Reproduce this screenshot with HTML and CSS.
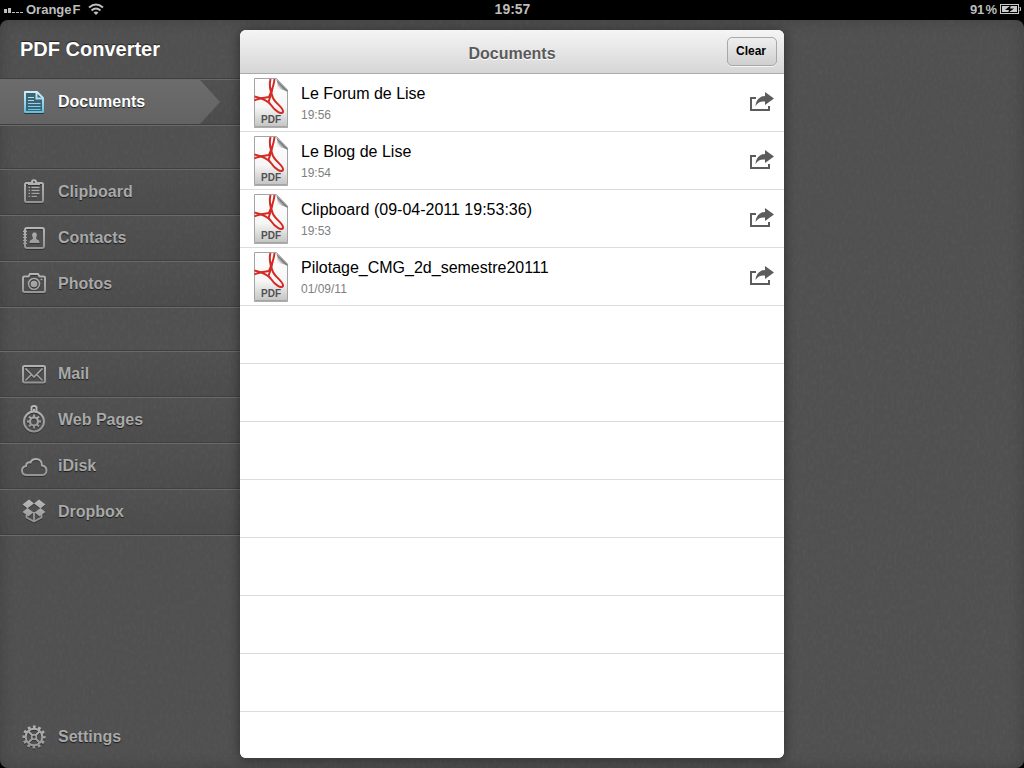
FILE: index.html
```html
<!DOCTYPE html>
<html lang="en">
<head>
<meta charset="utf-8">
<meta name="viewport" content="width=device-width, initial-scale=1">
<title>PDF Converter</title>
<link rel="stylesheet" href="styles.css">
</head>
<body>
<svg class="defs" width="0" height="0" aria-hidden="true">
  <defs>
    <linearGradient id="metal" gradientUnits="userSpaceOnUse" x1="0" y1="2" x2="0" y2="26"><stop offset="0" stop-color="#b8b8b8"/><stop offset="1" stop-color="#909090"/></linearGradient>
    <linearGradient id="sky" gradientUnits="userSpaceOnUse" x1="0" y1="3" x2="0" y2="25"><stop offset="0" stop-color="#d4eefa"/><stop offset="1" stop-color="#5cbfe0"/></linearGradient>
    <linearGradient id="paper" x1="0" y1="0" x2="0" y2="1"><stop offset="0" stop-color="#fff"/><stop offset=".6" stop-color="#f6f6f6"/><stop offset="1" stop-color="#c4c4c4"/></linearGradient>
    <linearGradient id="fold" x1="0" y1="1" x2="1" y2="0"><stop offset="0" stop-color="#fff"/><stop offset=".3" stop-color="#eee"/><stop offset=".5" stop-color="#777"/><stop offset=".75" stop-color="#ddd"/></linearGradient>
    <symbol id="pdf" viewBox="0 0 36 50">
      <path d="M1.500 .5H23.500L34.500 12V48.500H1.500Z" fill="url(#paper)" stroke="#a4a4a4"/>
      <path d="M1 49.500H35" stroke="#777" stroke-opacity=".6"/>
      <path d="M23 1C25 5 25 9 22.500 12C26 11 30 11.500 34.500 14V12Z" fill="url(#fold)"/>
      <g fill="none" stroke="#d42a24" stroke-width="2">
        <path d="M17.500 1C15.500 8 17.500 14 20 20C23 26 31 30 30 34C28.500 37 22 33 18 27C15 22.500 8 20 1.500 18.500"/>
        <path d="M21.500 1C21 8 18 14 16 19C12 20 6 20 1.500 22.500"/>
        <path d="M19.500 10C18.500 15 17 20 15.500 24"/>
      </g>
    </symbol>
    <symbol id="share" viewBox="0 0 24 20">
      <path d="M6 6H1V18H19V14" fill="none" stroke="#5c5c5c" stroke-width="2"/>
      <path d="M15 0L24 6.500L15 13V9.500C11 9 8 10 5.500 14C6 8 10 4 15 4Z" fill="#5c5c5c"/>
    </symbol>
  </defs>
</svg>

<header class="status">
  <div class="status-side">
    <svg width="20" height="8" viewBox="0 0 20 8" fill="#bdbdbd"><path d="M0 4h3v4H0zM4 3h3v5H4zM8 7h3v1H8zM12 7h3v1h-3zM16 7h3v1h-3z"/></svg>
    <span>Orange&#8202;F</span>
    <svg class="wifi" width="16" height="12" viewBox="0 0 16 12" fill="none" stroke="#bdbdbd" stroke-width="2"><path d="M1 4.500Q8-1.500 15 4.500M3.500 7.500Q8 3.500 12.500 7.500"/><path d="M5.500 9.500Q8 7.500 10.500 9.500L8 12Z" fill="#bdbdbd" stroke="none"/></svg>
  </div>
  <time class="clock">19:57</time>
  <div class="status-side status-right">
    <span>91&#8202;%</span>
    <svg width="21" height="10" viewBox="0 0 21 10"><rect x=".5" y=".5" width="18" height="9" fill="none" stroke="#c8c8c8"/><rect x="2" y="2" width="15" height="6" fill="#c8c8c8"/><path d="M19.500 3.500H20.500V6.500H19.500" fill="none" stroke="#c8c8c8"/><path d="M11 1L5 6H9L8 9L14 4.500H10Z" fill="#000"/></svg>
  </div>
</header>

<div class="app">
  <svg class="grain" aria-hidden="true"><filter id="noise"><feTurbulence type="fractalNoise" baseFrequency=".35 .2" numOctaves="3" seed="4"/><feColorMatrix values="0 0 0 0 .5  0 0 0 0 .5  0 0 0 0 .5  1.500 0 0 0 -.6"/></filter><rect width="100%" height="100%" filter="url(#noise)"/></svg>

  <nav class="sidebar" aria-label="Sources">
    <h1 class="brand">PDF Converter</h1>
    <ul class="group">
      <li class="item"><a class="link active" href="#documents" aria-current="page">
        <svg class="icon" viewBox="0 0 24 28" fill="none" stroke="url(#sky)"><path d="M3 4H15L21 10V24H3Z" stroke-width="2" stroke-linejoin="round" fill="#3c6474"/><path d="M14.500 4V10.500H21" stroke-width="2"/><path d="M6 9.500H12M6 12.500H12M6 15.500H18.500M6 18.500H18.500M6 21.500H18.500" stroke-width="1.200"/></svg>
        <span>Documents</span></a></li>
    </ul>
    <ul class="group">
      <li class="item"><a class="link" href="#clipboard">
        <svg class="icon" viewBox="0 0 24 28" fill="none" stroke="url(#metal)"><rect x="3" y="5" width="18" height="19" rx="1.500" stroke-width="2"/><path d="M6 7V4H9Q9 1.200 12 1.200T15 4H18V7Z" fill="url(#metal)" stroke="none"/><circle cx="12" cy="4" r="1" fill="#444" stroke="none"/><path d="M6.500 9.500H8M9.500 9.500H17.500M6.500 12.500H8M9.500 12.500H17.500M6.500 15.500H8M9.500 15.500H17.500M6.500 18.500H8M9.500 18.500H15" stroke-width="1.400"/></svg>
        <span>Clipboard</span></a></li>
      <li class="item"><a class="link" href="#contacts">
        <svg class="icon" viewBox="0 0 24 28" fill="none" stroke="url(#metal)"><rect x="3" y="4" width="19" height="20" rx="2" stroke-width="2"/><path d="M1 7.500H5M1 10.500H5M1 13.500H5M1 16.500H5M1 19.500H5" stroke-width="1.300"/><path d="M12.500 8.500C15 8.500 15.300 11 14.500 13C14 14.200 14 15 15 15.500C17 16.200 17.500 17 17.500 19H7.500C7.500 17 8 16.200 10 15.500C11 15 11 14.200 10.500 13C9.700 11 10 8.500 12.500 8.500Z" fill="url(#metal)" stroke="none"/></svg>
        <span>Contacts</span></a></li>
      <li class="item"><a class="link" href="#photos">
        <svg class="icon" viewBox="0 0 24 28" fill="none" stroke="url(#metal)"><path d="M2.500 6.500H6.500L8 4H16L17.500 6.500H21.500Q23 6.500 23 8V20.500Q23 22 21.500 22H2.500Q1 22 1 20.500V8Q1 6.500 2.500 6.500Z" stroke-width="2"/><circle cx="12" cy="14" r="5.500" stroke-width="1.600"/><circle cx="12" cy="14" r="3.300" fill="url(#metal)" stroke="none"/><circle cx="19.500" cy="9.500" r="1" fill="#aaa" stroke="none"/></svg>
        <span>Photos</span></a></li>
    </ul>
    <ul class="group">
      <li class="item"><a class="link" href="#mail">
        <svg class="icon" viewBox="0 0 24 28" fill="none" stroke="url(#metal)"><rect x="1" y="6" width="22" height="16.500" rx="1.500" stroke-width="2"/><path d="M3.500 8.500L12 17L20.500 8.500M3.500 20.500L9 15M20.500 20.500L15 15" stroke-width="1.600"/></svg>
        <span>Mail</span></a></li>
      <li class="item"><a class="link" href="#web">
        <svg class="icon" viewBox="0 0 24 28" fill="none" stroke="url(#metal)"><circle cx="12" cy="15.500" r="10" stroke-width="2"/><path d="M9.500 5V1.500Q9.500 0 12 0T14.500 1.500V5M12 3V6" stroke-width="2"/><circle cx="12" cy="15.500" r="4" stroke-width="2.200"/><path d="M12 8.500V11.500M12 19.500V22.500M5 15.500H8M16 15.500H19M7 10.500L9 12.500M15 18.500L17 20.500M17 10.500L15 12.500M9 18.500L7 20.500" stroke-width="1.800"/></svg>
        <span>Web Pages</span></a></li>
      <li class="item"><a class="link" href="#idisk">
        <svg class="icon" viewBox="0 0 24 28" fill="none" stroke="url(#metal)"><path d="M5 23C1.500 23 0 21 0 18.500C0 16 1.500 14.500 4 14C4 11 6.500 10 8.500 10.500C9.500 8 11.500 7 14 7C17.500 7 20 9.500 20 13.500C22.500 14 24.500 16 24.500 18.500C24.500 21 22.500 23 20 23Z" stroke-width="2"/></svg>
        <span>iDisk</span></a></li>
      <li class="item"><a class="link" href="#dropbox">
        <svg class="icon" viewBox="0 0 24 28" fill="url(#metal)"><path d="M7 1.500L12 5.500L5.500 10.500L.5 6.500ZM17 1.500L12 5.500L18.500 10.500L23.500 6.500ZM5.500 10L11.500 14.500L6.500 18.500L.5 14ZM18.500 10L12.500 14.500L17.500 18.500L23.500 14Z"/><path d="M4.500 16.500V19.500L12 23.500L19.500 19.500V16.500M12 14V23.500" fill="none" stroke="url(#metal)" stroke-width="1.800"/></svg>
        <span>Dropbox</span></a></li>
    </ul>
    <a class="link settings" href="#settings">
      <svg class="icon" viewBox="0 0 24 28" fill="none" stroke="url(#metal)"><circle cx="12" cy="14" r="8.300" stroke-width="2"/><circle cx="12" cy="14" r="10.200" stroke-width="2.800" stroke-dasharray="2.800 2.541" stroke-dashoffset="1.400"/><circle cx="12" cy="14" r="2.300" stroke-width="1.500"/><path d="M6 8L10.500 12.500M18 8L13.500 12.500M6 20L10.500 15.500M18 20L13.500 15.500" stroke-width="1.800"/></svg>
      <span>Settings</span></a>
  </nav>

  <main class="panel">
    <header class="bar">
      <h2 class="title">Documents</h2>
      <button class="clear" type="button">Clear</button>
    </header>
    <ul class="files">
      <li class="file"><span class="thumb"><svg class="page"><use href="#pdf"/></svg><span class="tag">PDF</span></span><div class="info"><span class="name">Le Forum de Lise</span><span class="date">19:56</span></div><button class="share" type="button" aria-label="Share Le Forum de Lise"><svg width="24" height="20"><use href="#share"/></svg></button></li>
      <li class="file"><span class="thumb"><svg class="page"><use href="#pdf"/></svg><span class="tag">PDF</span></span><div class="info"><span class="name">Le Blog de Lise</span><span class="date">19:54</span></div><button class="share" type="button" aria-label="Share Le Blog de Lise"><svg width="24" height="20"><use href="#share"/></svg></button></li>
      <li class="file"><span class="thumb"><svg class="page"><use href="#pdf"/></svg><span class="tag">PDF</span></span><div class="info"><span class="name">Clipboard (09-04-2011 19:53:36)</span><span class="date">19:53</span></div><button class="share" type="button" aria-label="Share Clipboard"><svg width="24" height="20"><use href="#share"/></svg></button></li>
      <li class="file"><span class="thumb"><svg class="page"><use href="#pdf"/></svg><span class="tag">PDF</span></span><div class="info"><span class="name">Pilotage_CMG_2d_semestre20111</span><span class="date">01/09/11</span></div><button class="share" type="button" aria-label="Share Pilotage_CMG_2d_semestre20111"><svg width="24" height="20"><use href="#share"/></svg></button></li>
    </ul>
    <div class="blank"></div>
  </main>
</div>
</body>
</html>
```

FILE: styles.css
```css
* { box-sizing: border-box; }

body {
  margin: 0;
  min-height: 100vh;
  display: flex;
  flex-direction: column;
  background: #000;
  font-family: "Liberation Sans", Arial, sans-serif;
}

ul { list-style: none; margin: 0; padding: 0; }
h1, h2 { margin: 0; }
svg { display: block; flex: none; }
.defs { position: absolute; }

.status {
  display: grid;
  grid-template-columns: 1fr auto 1fr;
  align-items: center;
  height: 20px;
  padding: 0 3px 2px 4px;
  color: #bdbdbd;
  font-size: 13px;
  font-weight: bold;
}
.status-side { display: flex; align-items: center; gap: 2px; }
.status-right { justify-content: flex-end; gap: 3px; }
.wifi { margin-left: 5px; }
.clock { font-size: 14px; }

.app {
  position: relative;
  flex: 1;
  display: grid;
  grid-template-columns: 240px minmax(0, 1fr) 240px;
  border-radius: 8px;
  overflow: hidden;
  background: #505050;
  box-shadow: inset 0 0 16px rgba(0, 0, 0, .2);
}
.grain {
  position: absolute;
  inset: 0;
  width: 100%;
  height: 100%;
  opacity: .07;
  pointer-events: none;
}

.sidebar {
  position: relative;
  display: flex;
  flex-direction: column;
  padding-bottom: 8px;
}
.brand {
  height: 58px;
  line-height: 58px;
  padding-left: 20px;
  color: #fff;
  font-size: 20px;
  text-shadow: 0 -1px 1px #222;
}
.group {
  margin-bottom: 42px;
  border-top: 1px solid #3f3f3f;
  border-bottom: 1px solid #6a6a6a;
}
.item {
  height: 46px;
  border-top: 1px solid #6a6a6a;
  border-bottom: 1px solid #3f3f3f;
  background: linear-gradient(transparent, rgba(0, 0, 0, .06));
}
.link {
  display: flex;
  align-items: center;
  gap: 12px;
  height: 100%;
  padding-left: 22px;
  color: #a9a9a9;
  font-size: 16px;
  font-weight: bold;
  text-decoration: none;
  text-shadow: 0 1px 1px #1c1c1c;
}
.active {
  width: 220px;
  color: #fff;
  background: linear-gradient(#6c6c6c, #636363);
  clip-path: polygon(0 0, 200px 0, 100% 50%, 200px 100%, 0 100%);
}
.icon {
  width: 24px;
  height: 28px;
  overflow: visible;
  filter: drop-shadow(0 1px 0 #333);
}
.settings { height: 46px; margin-top: auto; }

.panel {
  position: relative;
  display: flex;
  flex-direction: column;
  margin: 10px 0;
  border-radius: 6px;
  overflow: hidden;
  background: #fff;
  box-shadow: 0 1px 12px rgba(0, 0, 0, .45);
}
.bar {
  display: grid;
  grid-template-columns: 1fr auto 1fr;
  align-items: center;
  height: 44px;
  padding: 0 7px;
  background: linear-gradient(#f5f5f5, #d6d6d6);
  border-bottom: 1px solid #ababab;
}
.title {
  grid-column: 2;
  color: #5a5a5a;
  font-size: 16px;
  line-height: 20px;
  padding-top: 4px;
  text-shadow: 0 1px 0 #fff;
}
.clear {
  justify-self: end;
  width: 50px;
  height: 29px;
  padding: 0 2px 1px 0;
  border: 1px solid #a8a8a8;
  border-radius: 5px;
  background: linear-gradient(#efefef, #cfcfcf);
  box-shadow: 0 1px 0 #f4f4f4;
  color: #000;
  font: bold 12px "Liberation Sans", Arial, sans-serif;
}

.file {
  display: flex;
  align-items: center;
  height: 58px;
  padding: 0 10px 0 13px;
  border-bottom: 1px solid #dcdcdc;
}
.thumb { position: relative; width: 36px; height: 50px; }
.page { width: 36px; height: 50px; }
.tag {
  position: absolute;
  inset: auto 0 2px;
  color: #505050;
  font-size: 10px;
  font-weight: bold;
  line-height: 12px;
  text-align: center;
}
.info {
  flex: 1;
  display: flex;
  flex-direction: column;
  gap: 4px;
  padding: 1px 0 0 12px;
}
.name { color: #000; font-size: 16px; line-height: 20px; }
.date { color: #808080; font-size: 12px; line-height: 14px; }
.share { padding: 0 0 2px; border: 0; background: none; }

.blank {
  flex: 1;
  background: repeating-linear-gradient(#fff 0 57px, #dcdcdc 57px 58px);
}
```
